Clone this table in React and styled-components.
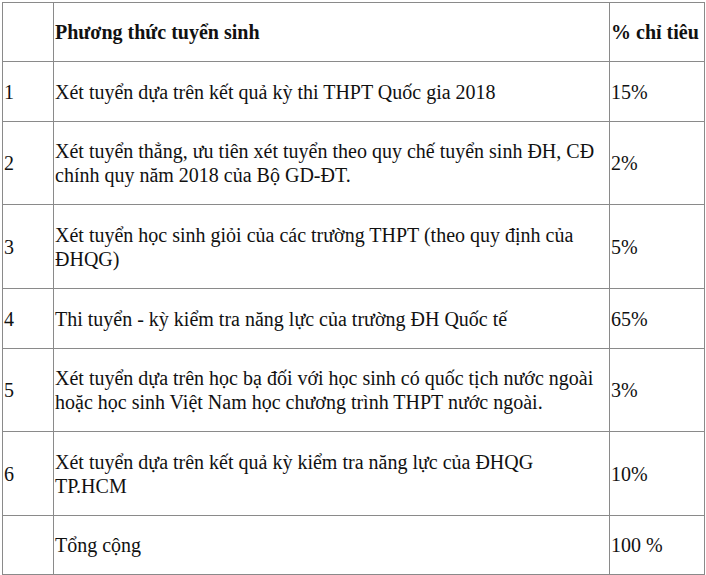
import React from 'react';
import styled, { createGlobalStyle } from 'styled-components';

const GlobalStyle = createGlobalStyle`
  html, body {
    margin: 0;
    padding: 0;
    background: #fff;
  }
  body {
    font-family: "Liberation Serif", "Times New Roman", serif;
    color: #111;
  }
`;

const Page = styled.div`
  padding: 2px 0 0 2px;
  width: 706px;
  height: 575px;
  box-sizing: border-box;
`;

const Table = styled.table`
  border-collapse: collapse;
  width: 702px;
  table-layout: fixed;
  border: 1px solid #3a3a3a;
  font-family: "Liberation Serif", "Times New Roman", serif;
  font-size: 20px;
  line-height: 24px;
  color: #111;
`;

const Cell = styled.td`
  border: 1px solid #8a8a8a;
  padding: 0 1px;
  height: ${(p) => p.$h}px;
  box-sizing: border-box;
  vertical-align: middle;
  font-weight: ${(p) => (p.$head ? 700 : 400)};
`;

const rows = [
  { n: '1', text: 'Xét tuyển dựa trên kết quả kỳ thi THPT Quốc gia 2018', pct: '15%', h: 60 },
  {
    n: '2',
    text: 'Xét tuyển thẳng, ưu tiên xét tuyển theo quy chế tuyển sinh ĐH, CĐ chính quy năm 2018 của Bộ GD-ĐT.',
    pct: '2%',
    h: 83,
  },
  {
    n: '3',
    text: 'Xét tuyển học sinh giỏi của các trường THPT (theo quy định của ĐHQG)',
    pct: '5%',
    h: 84,
  },
  { n: '4', text: 'Thi tuyển - kỳ kiểm tra năng lực của trường ĐH Quốc tế', pct: '65%', h: 60 },
  {
    n: '5',
    text: 'Xét tuyển dựa trên học bạ đối với học sinh có quốc tịch nước ngoài hoặc học sinh Việt Nam học chương trình THPT nước ngoài.',
    pct: '3%',
    h: 83,
  },
  {
    n: '6',
    text: 'Xét tuyển dựa trên kết quả kỳ kiểm tra năng lực của ĐHQG TP.HCM',
    pct: '10%',
    h: 84,
  },
  { n: '', text: 'Tổng cộng', pct: '100 %', h: 59 },
];

export default function App() {
  return (
    <Page>
      <GlobalStyle />
      <Table>
        <colgroup>
          <col style={{ width: 51 }} />
          <col style={{ width: 556 }} />
          <col style={{ width: 95 }} />
        </colgroup>
        <tbody>
          <tr>
            <Cell $h={59} />
            <Cell $h={59} $head>Phương thức tuyển sinh</Cell>
            <Cell $h={59} $head>% chỉ tiêu</Cell>
          </tr>
          {rows.map((r, i) => (
            <tr key={i}>
              <Cell $h={r.h}>{r.n}</Cell>
              <Cell $h={r.h}>{r.text}</Cell>
              <Cell $h={r.h}>{r.pct}</Cell>
            </tr>
          ))}
        </tbody>
      </Table>
    </Page>
  );
}
